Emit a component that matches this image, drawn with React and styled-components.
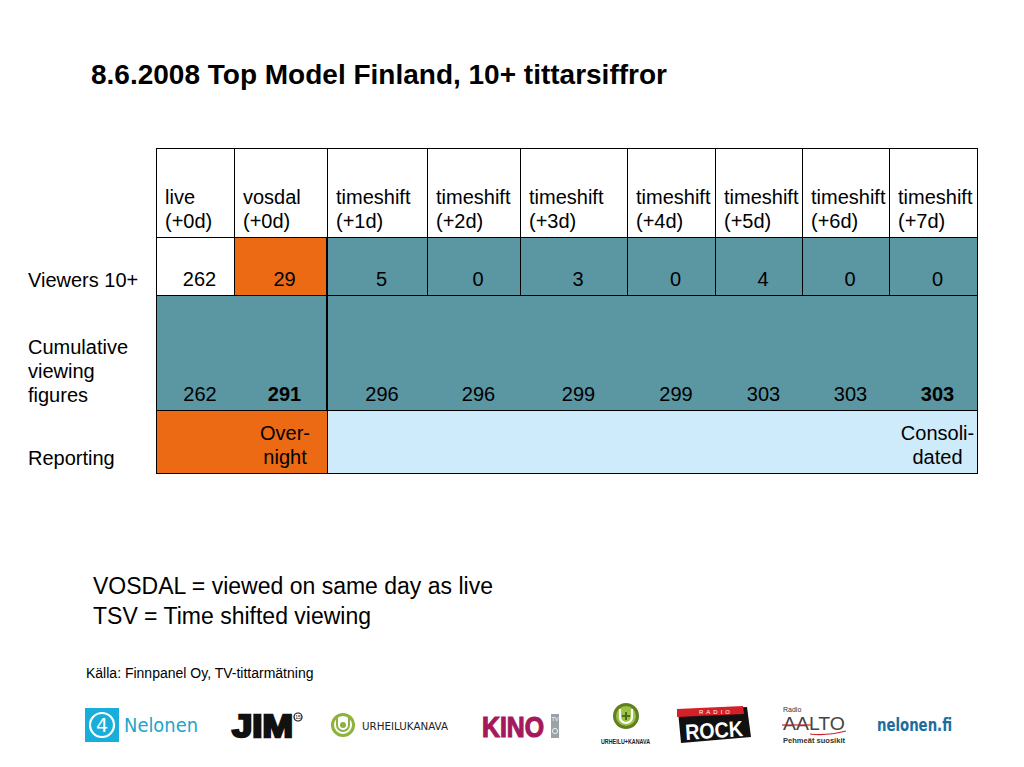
import React from "react";
import styled, { createGlobalStyle } from "styled-components";

const GlobalStyle = createGlobalStyle`
  html, body {
    margin: 0;
    padding: 0;
    background: #ffffff;
  }
  body {
    font-family: "Liberation Sans", Arial, sans-serif;
    color: #000;
  }
  svg {
    overflow: visible;
  }
`;

const TEAL = "#5b96a3";
const ORANGE = "#eb6a13";
const SKY = "#cdebfb";

const Page = styled.div`
  width: 1024px;
  height: 767px;
  overflow: hidden;
  background: #fff;
`;

const Title = styled.h1`
  margin: 58px 0 0 91px;
  font-size: 28px;
  line-height: 34px;
  font-weight: bold;
`;

const Grid = styled.div`
  display: grid;
  grid-template-columns: 128px 79px 93px 100px 93px 107px 88px 87px 87px 88px;
  grid-template-rows: 90px 58px 115px 63px;
  margin: 56px 0 0 28px;
  font-size: 20px;
  line-height: 24px;
`;

const Label = styled.div`
  display: flex;
  flex-direction: column;
  justify-content: flex-end;
  padding-bottom: 4px;
`;

const Cell = styled.div`
  box-sizing: border-box;
  display: flex;
  flex-direction: column;
  justify-content: flex-end;
  padding: 0 0 4px 8px;
  background: ${(p) => p.$bg || "#fff"};
  text-align: ${(p) => (p.$head ? "left" : "center")};
  font-weight: ${(p) => (p.$bold ? "bold" : "normal")};
  border-bottom: 1px solid #000;
  border-top: ${(p) => (p.$top ? "1px solid #000" : "none")};
  border-left: ${(p) => (p.$left ? "1px solid #000" : "none")};
  border-right: ${(p) => (p.$right ? `${p.$right}px solid #000` : "none")};
`;

const Notes = styled.div`
  margin: 97px 0 0 93px;
  font-size: 23px;
  line-height: 30px;
`;

const Source = styled.div`
  margin: 33px 0 0 86px;
  font-size: 14px;
  line-height: 18px;
`;

const Logos = styled.div`
  display: flex;
  align-items: center;
  height: 50px;
  margin-top: 18px;
  padding-left: 85px;
`;

const Slot = styled.div`
  flex: 0 0 ${(p) => p.$w}px;
  display: flex;
  align-items: center;
`;

const heads = [
  ["live", "(+0d)"],
  ["vosdal", "(+0d)"],
  ["timeshift", "(+1d)"],
  ["timeshift", "(+2d)"],
  ["timeshift", "(+3d)"],
  ["timeshift", "(+4d)"],
  ["timeshift", "(+5d)"],
  ["timeshift", "(+6d)"],
  ["timeshift", "(+7d)"],
];
const viewers = [262, 29, 5, 0, 3, 0, 4, 0, 0];
const cumulative = [262, 291, 296, 296, 299, 299, 303, 303, 303];

function NelonenLogo() {
  return (
    <svg width="120" height="40" viewBox="0 0 120 40">
      <rect x="0" y="3" width="34" height="34" fill="#19addc" />
      <circle cx="17" cy="20" r="12" fill="none" stroke="#fff" strokeWidth="2.2" />
      <text x="17" y="27" fontSize="19" fill="#fff" textAnchor="middle" fontFamily="DejaVu Sans, sans-serif">4</text>
      <text x="39" y="27" fontSize="19" fill="#22a5c9" fontFamily="DejaVu Sans, sans-serif" textLength="74" lengthAdjust="spacingAndGlyphs">Nelonen</text>
    </svg>
  );
}

function JimLogo() {
  return (
    <svg width="72" height="40" viewBox="0 0 72 40">
      <text x="1" y="32" fontSize="32" fontWeight="bold" fill="#111" stroke="#111" strokeWidth="2.4" fontFamily="Liberation Sans, Arial, sans-serif" textLength="61" lengthAdjust="spacingAndGlyphs">JIM</text>
      <circle cx="67" cy="12" r="4" fill="none" stroke="#111" strokeWidth="1.2" />
      <text x="67" y="14" fontSize="5" textAnchor="middle" fill="#111" fontFamily="Liberation Sans, sans-serif">15</text>
    </svg>
  );
}

function UrheiluLogo() {
  return (
    <svg width="122" height="40" viewBox="0 0 122 40">
      <circle cx="12" cy="20" r="10.5" fill="none" stroke="#8db33c" strokeWidth="3" />
      <path d="M6 13 v7 a6 6 0 0 0 12 0 v-7" fill="none" stroke="#8db33c" strokeWidth="2" />
      <circle cx="12" cy="20" r="3" fill="#8db33c" />
      <text x="31" y="25" fontSize="10.5" fill="#222" fontFamily="DejaVu Sans, sans-serif" textLength="86" lengthAdjust="spacingAndGlyphs">URHEILUKANAVA</text>
    </svg>
  );
}

function KinoLogo() {
  return (
    <svg width="80" height="40" viewBox="0 0 80 40">
      <text x="0" y="32" fontSize="29" fontWeight="bold" fill="#a5195b" stroke="#a5195b" strokeWidth="1.2" fontFamily="Liberation Sans, Arial, sans-serif" textLength="62" lengthAdjust="spacingAndGlyphs">KINO</text>
      <rect x="69" y="9" width="8" height="24" fill="#9aa3a8" />
      <text x="73" y="16" fontSize="5.5" fill="#fff" textAnchor="middle" fontFamily="Liberation Sans, sans-serif">TV</text>
      <circle cx="73" cy="26" r="2.6" fill="none" stroke="#fff" strokeWidth="0.8" />
    </svg>
  );
}

function UrheiluPlusLogo() {
  return (
    <svg width="54" height="48" viewBox="0 0 54 48">
      <circle cx="26" cy="15" r="13" fill="#5f7f22" />
      <circle cx="26" cy="15" r="10" fill="#9cc246" />
      <path d="M20 8 v8 a6 6 0 0 0 12 0 v-8" fill="none" stroke="#fff" strokeWidth="2.2" />
      <path d="M26 11 v8 M22 15 h8" stroke="#4d6b18" strokeWidth="2" />
      <text x="1" y="43" fontSize="7" fontWeight="bold" fill="#222" fontFamily="Liberation Sans, sans-serif" textLength="49" lengthAdjust="spacingAndGlyphs">URHEILU+KANAVA</text>
    </svg>
  );
}

function RockLogo() {
  return (
    <svg width="75" height="38" viewBox="0 0 75 38">
      <polygon points="1,5 70,1 74,31 4,37" fill="#111" />
      <polygon points="0,3 66,0 67,8 0,11" fill="#d42027" />
      <text x="22" y="8" fontSize="6" fill="#fff" fontFamily="Liberation Sans, sans-serif" letterSpacing="3">RADIO</text>
      <text x="8" y="32" fontSize="22" fontWeight="bold" fill="#fff" fontFamily="Liberation Sans, Arial, sans-serif" textLength="58" lengthAdjust="spacingAndGlyphs" transform="rotate(-4 37 24)">ROCK</text>
    </svg>
  );
}

function AaltoLogo() {
  return (
    <svg width="68" height="40" viewBox="0 0 68 40">
      <text x="1" y="7" fontSize="7" fill="#333" fontFamily="Liberation Sans, sans-serif">Radio</text>
      <text x="1" y="25" fontSize="18" fill="#444" fontFamily="Liberation Sans, sans-serif" textLength="62" lengthAdjust="spacingAndGlyphs">AALTO</text>
      <path d="M0 20 H30" stroke="#c8202a" strokeWidth="1.2" />
      <path d="M28 29 Q45 31 64 26" fill="none" stroke="#c8202a" strokeWidth="1.2" />
      <text x="1" y="38" fontSize="6.5" fontWeight="bold" fill="#333" fontFamily="Liberation Sans, sans-serif" textLength="62" lengthAdjust="spacingAndGlyphs">Pehmeät suosikit</text>
    </svg>
  );
}

function NelonenFiLogo() {
  return (
    <svg width="80" height="30" viewBox="0 0 80 30">
      <text x="0" y="21" fontSize="17" fontWeight="bold" fill="#1b6e9e" fontFamily="DejaVu Sans, sans-serif" textLength="75" lengthAdjust="spacingAndGlyphs">nelonen.fi</text>
    </svg>
  );
}

export default function App() {
  return (
    <Page>
      <GlobalStyle />
      <Title>8.6.2008 Top Model Finland, 10+ tittarsiffror</Title>

      <Grid>
        <Label />
        {heads.map((h, i) => (
          <Cell key={"h" + i} $head $top $left={i === 0} $right={1}>
            <span>{h[0]}</span>
            <span>{h[1]}</span>
          </Cell>
        ))}

        <Label>Viewers 10+</Label>
        {viewers.map((v, i) => (
          <Cell
            key={"v" + i}
            $left={i === 0}
            $right={i === 1 ? 2 : 1}
            $bg={i === 0 ? "#fff" : i === 1 ? ORANGE : TEAL}
          >
            {v}
          </Cell>
        ))}

        <Label>
          <span>Cumulative</span>
          <span>viewing</span>
          <span>figures</span>
        </Label>
        {cumulative.map((v, i) => (
          <Cell
            key={"c" + i}
            $left={i === 0}
            $right={i === 1 ? 2 : i === 8 ? 1 : 0}
            $bold={i === 1 || i === 8}
            $bg={TEAL}
          >
            {v}
          </Cell>
        ))}

        <Label>Reporting</Label>
        {cumulative.map((_, i) => (
          <Cell
            key={"r" + i}
            $left={i === 0}
            $right={i === 1 || i === 8 ? 1 : 0}
            $bg={i < 2 ? ORANGE : SKY}
          >
            {i === 1 && (
              <>
                <span>Over-</span>
                <span>night</span>
              </>
            )}
            {i === 8 && (
              <>
                <span>Consoli-</span>
                <span>dated</span>
              </>
            )}
          </Cell>
        ))}
      </Grid>

      <Notes>
        <div>VOSDAL = viewed on same day as live</div>
        <div>TSV = Time shifted viewing</div>
      </Notes>

      <Source>Källa: Finnpanel Oy, TV-tittarmätning</Source>

      <Logos>
        <Slot $w={146}><NelonenLogo /></Slot>
        <Slot $w={100}><JimLogo /></Slot>
        <Slot $w={151}><UrheiluLogo /></Slot>
        <Slot $w={118}><KinoLogo /></Slot>
        <Slot $w={77}><UrheiluPlusLogo /></Slot>
        <Slot $w={105}><RockLogo /></Slot>
        <Slot $w={95}><AaltoLogo /></Slot>
        <Slot $w={78}><NelonenFiLogo /></Slot>
      </Logos>
    </Page>
  );
}
